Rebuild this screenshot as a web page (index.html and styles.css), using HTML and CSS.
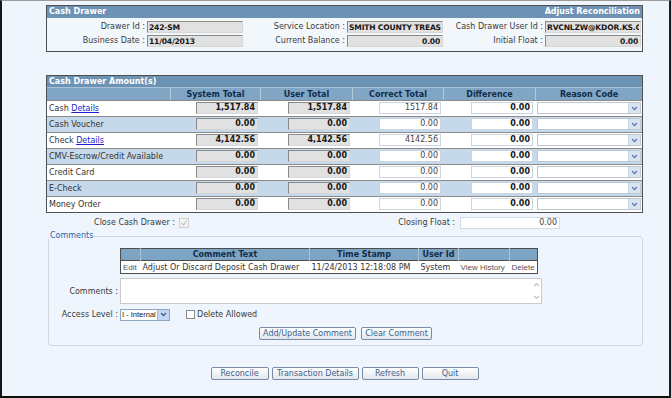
FILE: index.html
```html
<!doctype html>
<html>
<head>
<meta charset="utf-8">
<title>Adjust Reconciliation</title>
<link rel="stylesheet" href="styles.css">
</head>
<body>
<div class="window">
 <div class="page">

  <div class="panel">
    <div class="bar"><span>Cash Drawer</span><span>Adjust Reconciliation</span></div>
    <div class="info">
      <label>Drawer Id :</label><input class="ro" value="242-SM" readonly>
      <label>Service Location :</label><input class="ro" value="SMITH COUNTY TREAS" readonly>
      <label>Cash Drawer User Id :</label><input class="ro" value="RVCNLZW@KDOR.KS.GOV" readonly>
      <label>Business Date :</label><input class="ro" value="11/04/2013" readonly>
      <label>Current Balance :</label><input class="ro num" value="0.00" readonly>
      <label>Initial Float :</label><input class="ro num" value="0.00" readonly>
    </div>
  </div>

  <div class="panel amounts">
    <div class="bar"><span>Cash Drawer Amount(s)</span></div>
    <table class="grid">
      <colgroup><col class="c-name"><col class="c-sys"><col class="c-user"><col class="c-cor"><col class="c-dif"><col></colgroup>
      <thead>
        <tr><th></th><th>System Total</th><th>User Total</th><th>Correct Total</th><th>Difference</th><th>Reason Code</th></tr>
      </thead>
      <tbody>
        <tr>
          <td class="name">Cash <a href="#">Details</a></td>
          <td><input class="ro num" value="1,517.84" readonly></td>
          <td><input class="ro num" value="1,517.84" readonly></td>
          <td><input class="edit" value="1517.84"></td>
          <td><input class="edit strong" value="0.00" readonly></td>
          <td class="reason"><span class="combo"><span class="val"></span><span class="arr"><svg width="7" height="5" viewBox="0 0 7 5"><path d="M1 1l2.5 2.5L6 1" stroke="#5a7bb0" stroke-width="1.3" fill="none"/></svg></span></span></td>
        </tr>
        <tr>
          <td class="name">Cash Voucher</td>
          <td><input class="ro num" value="0.00" readonly></td>
          <td><input class="ro num" value="0.00" readonly></td>
          <td><input class="edit" value="0.00"></td>
          <td><input class="edit strong" value="0.00" readonly></td>
          <td class="reason"><span class="combo"><span class="val"></span><span class="arr"><svg width="7" height="5" viewBox="0 0 7 5"><path d="M1 1l2.5 2.5L6 1" stroke="#5a7bb0" stroke-width="1.3" fill="none"/></svg></span></span></td>
        </tr>
        <tr>
          <td class="name">Check <a href="#">Details</a></td>
          <td><input class="ro num" value="4,142.56" readonly></td>
          <td><input class="ro num" value="4,142.56" readonly></td>
          <td><input class="edit" value="4142.56"></td>
          <td><input class="edit strong" value="0.00" readonly></td>
          <td class="reason"><span class="combo"><span class="val"></span><span class="arr"><svg width="7" height="5" viewBox="0 0 7 5"><path d="M1 1l2.5 2.5L6 1" stroke="#5a7bb0" stroke-width="1.3" fill="none"/></svg></span></span></td>
        </tr>
        <tr>
          <td class="name">CMV-Escrow/Credit Available</td>
          <td><input class="ro num" value="0.00" readonly></td>
          <td><input class="ro num" value="0.00" readonly></td>
          <td><input class="edit" value="0.00"></td>
          <td><input class="edit strong" value="0.00" readonly></td>
          <td class="reason"><span class="combo"><span class="val"></span><span class="arr"><svg width="7" height="5" viewBox="0 0 7 5"><path d="M1 1l2.5 2.5L6 1" stroke="#5a7bb0" stroke-width="1.3" fill="none"/></svg></span></span></td>
        </tr>
        <tr>
          <td class="name">Credit Card</td>
          <td><input class="ro num" value="0.00" readonly></td>
          <td><input class="ro num" value="0.00" readonly></td>
          <td><input class="edit" value="0.00"></td>
          <td><input class="edit strong" value="0.00" readonly></td>
          <td class="reason"><span class="combo"><span class="val"></span><span class="arr"><svg width="7" height="5" viewBox="0 0 7 5"><path d="M1 1l2.5 2.5L6 1" stroke="#5a7bb0" stroke-width="1.3" fill="none"/></svg></span></span></td>
        </tr>
        <tr>
          <td class="name">E-Check</td>
          <td><input class="ro num" value="0.00" readonly></td>
          <td><input class="ro num" value="0.00" readonly></td>
          <td><input class="edit" value="0.00"></td>
          <td><input class="edit strong" value="0.00" readonly></td>
          <td class="reason"><span class="combo"><span class="val"></span><span class="arr"><svg width="7" height="5" viewBox="0 0 7 5"><path d="M1 1l2.5 2.5L6 1" stroke="#5a7bb0" stroke-width="1.3" fill="none"/></svg></span></span></td>
        </tr>
        <tr>
          <td class="name">Money Order</td>
          <td><input class="ro num" value="0.00" readonly></td>
          <td><input class="ro num" value="0.00" readonly></td>
          <td><input class="edit" value="0.00"></td>
          <td><input class="edit strong" value="0.00" readonly></td>
          <td class="reason"><span class="combo"><span class="val"></span><span class="arr"><svg width="7" height="5" viewBox="0 0 7 5"><path d="M1 1l2.5 2.5L6 1" stroke="#5a7bb0" stroke-width="1.3" fill="none"/></svg></span></span></td>
        </tr>
      </tbody>
    </table>
  </div>

  <div class="closing">
    <span class="lbl">Close Cash Drawer :</span>
    <span class="check"><svg width="8" height="8" viewBox="0 0 8 8"><path d="M1.5 4l2 2 3-4.5" stroke="#c4c4c4" stroke-width="1.2" fill="none"/></svg></span>
    <span class="float-lbl">Closing Float :</span>
    <input class="edit" value="0.00">
  </div>

  <fieldset class="comments">
    <legend>Comments</legend>
    <div class="cform">
      <span></span>
      <table class="notes">
        <colgroup><col class="n-edit"><col class="n-text"><col class="n-time"><col class="n-user"><col class="n-hist"><col></colgroup>
        <thead>
          <tr><th></th><th>Comment Text</th><th>Time Stamp</th><th>User Id</th><th></th><th></th></tr>
        </thead>
        <tbody>
          <tr>
            <td class="act">Edit</td>
            <td>Adjust Or Discard Deposit Cash Drawer</td>
            <td>11/24/2013 12:18:08 PM</td>
            <td>System</td>
            <td class="act">View History</td>
            <td class="act">Delete</td>
          </tr>
        </tbody>
      </table>

      <label>Comments :</label>
      <div class="memo">
        <span class="sb">
          <svg width="7" height="5" viewBox="0 0 7 5"><path d="M1 4l2.5-2.5L6 4" stroke="#c2c2c2" stroke-width="1.2" fill="none"/></svg>
          <svg width="7" height="5" viewBox="0 0 7 5"><path d="M1 1l2.5 2.5L6 1" stroke="#c2c2c2" stroke-width="1.2" fill="none"/></svg>
        </span>
      </div>

      <label>Access Level :</label>
      <div class="access">
        <span class="combo small"><span class="val">I - Internal</span><span class="arr blue"><svg width="7" height="5" viewBox="0 0 7 5"><path d="M1 1l2.5 2.5L6 1" stroke="#3f5f96" stroke-width="1.3" fill="none"/></svg></span></span>
        <span class="box"></span>
        <span class="cb-lbl">Delete Allowed</span>
      </div>

      <div class="buttons">
        <button class="btn w-add">Add/Update Comment</button>
        <button class="btn w-clear">Clear Comment</button>
      </div>
    </div>
  </fieldset>

  <div class="actions">
    <button class="btn w-rec">Reconcile</button>
    <button class="btn w-trans">Transaction Details</button>
    <button class="btn w-ref">Refresh</button>
    <button class="btn w-quit">Quit</button>
  </div>

 </div>
</div>
</body>
</html>
```

FILE: styles.css
```css
html, body { margin:0; padding:0; }
body { font-family:"DejaVu Sans", Verdana, sans-serif; font-size:8px; color:#3a3a3a; }
input, button { font:inherit; margin:0; box-sizing:border-box; outline:none; }

/* outer window frame */
.window { width:671px; height:398px; box-sizing:border-box; overflow:hidden; background:#eef5fc;
  border-style:solid; border-width:1px 2px 2px 2px; border-color:#9b9b9b #1c1c1c #0e0e0e #161616; }
.page { width:597px; margin-left:44px; padding-top:4px; }

/* panels */
.panel { border:1px solid #505050; background:#f2f7fc; }
.bar { display:flex; justify-content:space-between; height:12px; line-height:12px; padding:0 2px; background:#6c93b4; color:#fff; font-weight:bold; }

.info { display:grid; grid-template-columns:98px 96px 100px 96px 98px 96px; column-gap:2px; row-gap:2px; padding:3px 0 4px; }
.info label { text-align:right; line-height:12px; white-space:nowrap; }
.info .ro { font-size:7.6px; letter-spacing:-0.2px; padding:0 1px; }

.ro { height:12px; padding:0 2px; background:#e1e1e1; color:#161616; font-weight:bold; border:1px solid; border-color:#8a8a8a #d6d6d6 #d6d6d6 #8a8a8a; vertical-align:middle; }
.info .ro.num { padding-right:2px; }
.num { text-align:right; }
.edit { height:12px; padding:0 2px; background:#fff; border:1px solid #cbd5df; color:#444; text-align:right; vertical-align:middle; }
.edit.strong { font-weight:bold; color:#161616; }

/* amounts grid */
.amounts { margin-top:23px; background:#fff; }
.amounts .bar { height:11px; line-height:11px; }
.grid { width:100%; border-spacing:0; table-layout:fixed; }
.grid .c-name { width:123px; }
.grid .c-sys { width:90px; }
.grid .c-user { width:92px; }
.grid .c-cor { width:91px; }
.grid .c-dif { width:92px; }
.grid thead tr { height:13px; }
.grid th { padding:0; background:#80a5c5; color:#112d4b; font-weight:bold; border-top:1px solid #a9c3d9; border-left:1px solid #b3cadd; }
.grid th:first-child { border-left:0; }
.grid tbody tr { height:16px; }
.grid tbody tr:nth-child(even) { background:#c6d9ea; }
.grid td { padding:0 2px 0 0; border-top:1px solid #8b8b8b; text-align:right; line-height:12px; }
.grid td.name { text-align:left; padding-left:2px; color:#333; }
.grid td.reason { text-align:left; padding-left:2px; }
.grid a { color:#1d1dcc; }
.grid .ro, .grid .edit { width:62px; }

.combo { display:inline-flex; width:104px; height:12px; box-sizing:border-box; border:1px solid #bcc7d2; background:#fff; vertical-align:middle; }
.combo .val { flex:1; padding-left:2px; line-height:10px; color:#222; white-space:nowrap; overflow:hidden; }
.combo .arr { width:11px; background:#dae5f1; border-left:1px solid #c6d3e1; display:flex; align-items:center; justify-content:center; }
.combo .arr.blue { background:#c3d5f1; border-left-color:#9fb5da; }
.combo.small { width:50px; border-color:#8fa6c2; }
.combo.small .val { font-family:"Liberation Sans", Arial, sans-serif; font-size:7.5px; padding-left:1px; }

/* close drawer row */
.closing { display:flex; align-items:center; height:17px; padding-top:1px; }
.closing .lbl { width:129px; text-align:right; }
.check { width:10px; height:10px; box-sizing:border-box; margin-left:4px; border:1px solid #cdcdcd; background:#f3f3f3; display:flex; align-items:center; justify-content:center; }
.closing .float-lbl { width:266px; text-align:right; }
.closing .edit { width:100px; margin-left:5px; border-color:#d4dde6; }

/* comments */
.comments { width:595px; box-sizing:border-box; margin:0 0 0 2px; padding:0 0 5px; border:1px solid #cfd6de; border-radius:4px; }
.comments legend { padding:0 1px; line-height:10px; color:#3262a8; }
.cform { display:grid; grid-template-columns:69px auto; column-gap:2px; row-gap:4px; padding-top:7px; align-items:center; justify-items:start; }
.cform label { justify-self:end; }

.notes { width:418px; table-layout:fixed; border-collapse:collapse; border:1px solid #4d4d4d; }
.notes .n-edit { width:20px; }
.notes .n-text { width:169px; }
.notes .n-time { width:109px; }
.notes .n-user { width:40px; }
.notes .n-hist { width:51px; }
.notes th { height:11px; padding:0; background:#7ea4c4; color:#112d4b; font-weight:bold; border-left:1px solid #aac2d8; }
.notes th:first-child { border-left:0; }
.notes td { height:12px; padding:0 2px; background:#fff; border-top:1px solid #4d4d4d; white-space:nowrap; overflow:hidden; color:#333; }
.notes td.act { font-family:"Liberation Sans", Arial, sans-serif; color:#555; }

.memo { width:422px; height:26px; box-sizing:border-box; border:1px solid #cacaca; background:#fff; display:flex; justify-content:flex-end; }
.memo .sb { width:10px; padding:3px 0; display:flex; flex-direction:column; justify-content:space-between; align-items:center; }

.access { display:flex; align-items:center; height:13px; }
.box { width:9px; height:9px; box-sizing:border-box; margin-left:16px; border:1px solid #8a8a8a; background:#fff; }
.cb-lbl { margin-left:2px; }

.buttons { grid-column:1 / -1; justify-self:stretch; display:flex; justify-content:center; gap:5px; margin-top:2px; }
.actions { display:flex; justify-content:center; gap:3px; margin-top:21px; }
.btn { height:13px; padding:0; color:#3d5f8e; background:linear-gradient(#ffffff, #e3e6eb); border:1px solid #7a8ca3; border-radius:2px; }
.w-add { width:97px; }
.w-clear { width:71px; }
.w-rec { width:58px; }
.w-trans { width:87px; }
.w-ref { width:57px; }
.w-quit { width:57px; }
```
